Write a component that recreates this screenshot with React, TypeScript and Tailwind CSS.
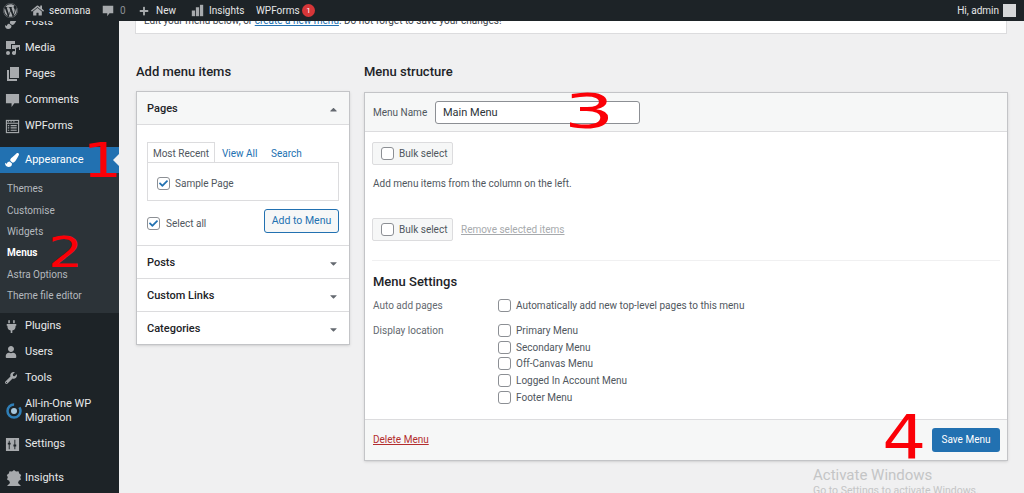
import type { ReactNode } from 'react';
import { FaWordpress, FaHome, FaPlus, FaPaintBrush, FaPlug, FaUser, FaWrench, FaCheck, FaCaretUp, FaCaretDown } from 'react-icons/fa';

const font = "font-['Roboto','Noto_Sans',sans-serif]";
const digit = "absolute text-[#fb0007] font-['DejaVu_Sans',sans-serif]";

function BarsIcon({ className }: { className?: string }) {
  return (
    <svg viewBox="0 0 16 16" className={className} fill="currentColor">
      <rect x="1" y="8" width="4" height="7" />
      <rect x="6" y="4" width="4" height="11" />
      <rect x="11" y="1" width="4" height="14" />
    </svg>
  );
}

function BubbleIcon({ className }: { className?: string }) {
  return (
    <svg viewBox="0 0 16 16" className={className} fill="currentColor">
      <path d="M1 1h14v10h-5l-3 4v-4H1z" />
    </svg>
  );
}

function MediaIcon() {
  return (
    <svg viewBox="0 0 16 16" className="w-4 h-4" fill="currentColor">
      <path d="M1 1h9v3H6v5H1z" />
      <path d="M7 5h8v5h-1V7l-3 1v5a2 2 0 1 1-1-1.7V9H7z" />
      <circle cx="3" cy="13" r="2" />
    </svg>
  );
}

function PagesIcon() {
  return (
    <svg viewBox="0 0 16 16" className="w-4 h-4" fill="currentColor">
      <path d="M5 1h9v11H5z" />
      <path d="M2 4h2v9h8v2H2z" />
    </svg>
  );
}

function FormsIcon() {
  return (
    <svg viewBox="0 0 16 16" className="w-[15px] h-[15px]" fill="none" stroke="currentColor" strokeWidth="1.2">
      <rect x="1.5" y="1.5" width="13" height="13" />
      <path d="M1.500 4.500h13M3 2.800h1M6 2.800h1M9 2.800h1M6 7h6.500M6 9.500h6.500M6 12h6.500M3 7h1.500M3 9.500h1.500M3 12h1.500" />
    </svg>
  );
}

function SettingsIcon() {
  return (
    <svg viewBox="0 0 16 16" className="w-[15px] h-[15px]" fill="currentColor">
      <path fillRule="evenodd" d="M1 1h14v14H1zM4 4v2H3v2h1v5h1V8h1V6H5V4zM10 3v5H9v2h1v3h1v-3h1V8h-1V3z" />
    </svg>
  );
}

function MigrationIcon() {
  return (
    <svg viewBox="0 0 18 18" className="w-[18px] h-[18px]" fill="none">
      <circle cx="9" cy="9" r="6.500" stroke="#2f7fb8" strokeWidth="2.500" strokeDasharray="30 6" />
      <circle cx="9" cy="9" r="3" fill="#a7c6dc" />
    </svg>
  );
}

function InsightsIcon() {
  return (
    <svg viewBox="0 0 18 18" className="w-[18px] h-[18px]" fill="currentColor">
      <path d="M9 1l2 1.500 2.500-.3.7 2.300 2 1.400-1 2.300.8 2.300-2.200 1.200L13 14H5l-.8-2.300L2 10.500l.8-2.300-1-2.300 2-1.400.7-2.300 2.500.3z" />
      <path d="M2 17l3-3h8l3 3z" />
    </svg>
  );
}

function MenuRow({ icon, label, h = 'h-[26px]' }: { icon: ReactNode; label: ReactNode; h?: string }) {
  return (
    <div className={`${h} flex items-center text-[11px] leading-[14px] text-[#e8e9ea]`}>
      <span className="w-[25px] pl-[5px] flex justify-start text-[#a7aaad]">{icon}</span>
      <span>{label}</span>
    </div>
  );
}

function SubItem({ children, bold }: { children: ReactNode; bold?: boolean }) {
  return (
    <div className={`h-[21.4px] flex items-center pl-[7px] text-[10px] ${bold ? 'font-bold text-white' : 'text-[#b4b9be]'}`}>
      {children}
    </div>
  );
}

function Checkbox({ checked }: { checked?: boolean }) {
  return (
    <span className="w-[13px] h-[13px] shrink-0 rounded-[3px] border border-[#8c8f94] bg-white flex items-center justify-center">
      {checked && <FaCheck className="w-[9px] h-[9px] text-[#2271b1]" />}
    </span>
  );
}

function AccordionRow({ label }: { label: string }) {
  return (
    <div className="h-[33px] pt-[2px] flex items-center justify-between pl-[10px] pr-[10px] border-t border-[#dcdcde] text-[11px] font-medium text-[#1d2327]">
      <span>{label}</span>
      <FaCaretDown className="w-[11px] h-[11px] text-[#646970]" />
    </div>
  );
}

function BulkSelect() {
  return (
    <div className="w-[81px] h-[23px] shrink-0 flex items-center gap-[5px] pl-2 rounded-[2px] border border-[#dcdcde] bg-[#f6f7f7] text-[10px] text-[#50575e]">
      <Checkbox />
      <span>Bulk select</span>
    </div>
  );
}

function LocationRow({ label }: { label: string }) {
  return (
    <div className="h-[16.800px] flex items-center gap-[5px] text-[10px] text-[#50575e]">
      <Checkbox />
      <span>{label}</span>
    </div>
  );
}

export default function App() {
  return (
    <div className={`relative w-[1024px] h-[493px] overflow-hidden bg-[#f0f0f1] ${font}`}>
      {/* admin bar */}
      <div className="relative z-10 h-[21px] bg-[#1d2327] flex items-center justify-between text-[10px] text-[#e6e7e8]">
        <div className="flex items-center">
          <FaWordpress className="ml-[3px] w-[15px] h-[15px] text-[#a7aaad]" />
          <FaHome className="ml-[13px] w-[13px] h-[13px] text-[#a7aaad]" />
          <span className="ml-[5px] w-[42px]">seomana</span>
          <BubbleIcon className="ml-[11px] w-[12px] h-[12px] text-[#a7aaad]" />
          <span className="ml-[6px] w-[9px] text-[#8c8f94]">0</span>
          <FaPlus className="ml-[10px] w-[10px] h-[10px] text-[#a7aaad]" />
          <span className="ml-[7px] w-[24px]">New</span>
          <BarsIcon className="ml-[11px] w-[13px] h-[13px] text-[#a7aaad]" />
          <span className="ml-[5px] w-[38px]">Insights</span>
          <span className="ml-[9px] w-[44px]">WPForms</span>
          <span className="ml-[2px] w-[13px] h-[13px] rounded-full bg-[#d63638] text-white text-[8px] flex items-center justify-center">1</span>
        </div>
        <div className="flex items-center gap-[4px] pr-[8px]">
          <span>Hi, admin</span>
          <span className="w-[13px] h-[13px] bg-[#d5d7d9]" />
        </div>
      </div>

      <div className="flex h-[472px]">
        {/* sidebar */}
        <aside className="relative w-[119px] shrink-0 overflow-hidden bg-[#1d2327]">
          <div className="mt-[-12px]">
            <MenuRow icon={<FaPaintBrush className="w-[13px] h-[13px]" />} label="Posts" />
            <MenuRow icon={<MediaIcon />} label="Media" />
            <MenuRow icon={<PagesIcon />} label="Pages" />
            <MenuRow icon={<BubbleIcon className="w-[15px] h-[15px]" />} label="Comments" />
            <MenuRow icon={<FormsIcon />} label="WPForms" />
            <div className="h-[8px]" />
            <div className="relative h-[26px] bg-[#2271b1] flex items-center text-[11px] text-white">
              <span className="w-[25px] pl-[5px]"><FaPaintBrush className="w-[14px] h-[14px]" /></span>
              <span>Appearance</span>
              <span className="absolute right-0 top-[7px] border-y-[6px] border-r-[6px] border-y-transparent border-r-[#f0f0f1]" />
            </div>
            <div className="bg-[#2c3338] pt-[5px] pb-[7px]">
              <SubItem>Themes</SubItem>
              <SubItem>Customise</SubItem>
              <SubItem>Widgets</SubItem>
              <SubItem bold>Menus</SubItem>
              <SubItem>Astra Options</SubItem>
              <SubItem>Theme file editor</SubItem>
            </div>
            <MenuRow icon={<FaPlug className="w-[13px] h-[13px]" />} label="Plugins" />
            <MenuRow icon={<FaUser className="w-[12px] h-[12px]" />} label="Users" />
            <MenuRow icon={<FaWrench className="w-[12px] h-[12px]" />} label="Tools" />
            <MenuRow icon={<MigrationIcon />} label={<>All-in-One WP<br />Migration</>} h="h-[40px]" />
            <MenuRow icon={<SettingsIcon />} label="Settings" />
            <div className="h-[8px]" />
            <MenuRow icon={<InsightsIcon />} label="Insights" />
          </div>
        </aside>

        {/* main */}
        <main className="flex-1 min-w-0 pl-[17px]">
          <div className="mt-[-21px] h-[34px] w-[872px] -ml-px bg-white border border-[#dcdcde] pl-[8px] pt-[12px] text-[10px] text-[#3c434a]">
            Edit your menu below, or <span className="text-[#2271b1] underline">create a new menu</span>. Do not forget to save your changes!
          </div>

          <div className="flex gap-[14px] mt-[28px]">
            {/* left column */}
            <div className="w-[214px] shrink-0">
              <h2 className="h-[20px] flex items-center text-[13px] font-medium text-[#1d2327]">Add menu items</h2>
              <div className="mt-[9px] bg-white border border-[#c3c4c7] shadow-sm">
                <div className="h-[33px] pt-[2px] flex items-center justify-between pl-[10px] pr-[10px] bg-[#f6f7f7] border-b border-[#dcdcde] text-[11px] font-medium text-[#1d2327]">
                  <span>Pages</span>
                  <FaCaretUp className="w-[11px] h-[11px] text-[#646970]" />
                </div>
                <div className="px-[10px] pt-[17px] h-[120px]">
                  <div className="flex text-[10px]">
                    <span className="w-[68px] h-[21px] pt-px flex items-center justify-center border border-b-0 border-[#dcdcde] text-[#50575e]">Most Recent</span>
                    <span className="ml-[7px] w-[49px] pt-px flex items-center text-[#2271b1]">View All</span>
                    <span className="pt-px flex items-center text-[#2271b1]">Search</span>
                  </div>
                  <div className="-mt-px h-[39px] border border-[#dcdcde] flex items-center gap-[5px] pl-[9px] pt-[3px] text-[10px] text-[#50575e]">
                    <Checkbox checked />
                    <span>Sample Page</span>
                  </div>
                  <div className="mt-[8px] flex items-center justify-between">
                    <span className="flex items-center gap-[6px] pt-[4px] text-[10px] text-[#50575e]">
                      <Checkbox checked />
                      Select all
                    </span>
                    <span className="w-[75px] h-[24px] flex items-center justify-center rounded-[3px] border border-[#2271b1] bg-[#f6f7f7] text-[10.5px] text-[#2271b1]">Add to Menu</span>
                  </div>
                </div>
                <AccordionRow label="Posts" />
                <AccordionRow label="Custom Links" />
                <AccordionRow label="Categories" />
              </div>
            </div>

            {/* right column */}
            <div className="w-[644px] shrink-0">
              <h2 className="h-[20px] flex items-center text-[13px] font-medium text-[#1d2327]">Menu structure</h2>
              <div className="mt-[10px] bg-white border border-[#c3c4c7] shadow-sm">
                <div className="h-[39px] flex items-center pl-[8px] bg-[#f6f7f7] border-b border-[#dcdcde] text-[10px] text-[#50575e]">
                  <span className="w-[62px]">Menu Name</span>
                  <span className="w-[205px] h-[23px] pt-[2px] flex items-center px-[7px] rounded-[3px] border border-[#8c8f94] bg-white text-[11px] text-[#2c3338]">Main Menu</span>
                </div>
                <div className="px-[7px] pt-[10px]">
                  <BulkSelect />
                  <p className="mt-[11px] pl-px h-[14px] flex items-center text-[10px] text-[#50575e]">Add menu items from the column on the left.</p>
                  <div className="mt-[28px] flex items-center gap-[8px]">
                    <BulkSelect />
                    <span className="text-[10px] text-[#a7aaad] underline">Remove selected items</span>
                  </div>
                  <div className="mt-[19px] border-t border-[#f0f0f1]" />
                  <h3 className="mt-[12px] pl-px h-[17px] flex items-center text-[13px] font-medium text-[#1d2327]">Menu Settings</h3>
                  <div className="mt-[7px] pl-px flex text-[10px] text-[#646970]">
                    <span className="w-[125px] h-[16px] flex items-center">Auto add pages</span>
                    <div className="flex items-center gap-[5px] h-[16px] text-[#50575e]">
                      <Checkbox />
                      <span>Automatically add new top-level pages to this menu</span>
                    </div>
                  </div>
                  <div className="mt-[9px] pl-px flex text-[10px] text-[#646970]">
                    <span className="w-[125px] h-[16px] flex items-center">Display location</span>
                    <div>
                      <LocationRow label="Primary Menu" />
                      <LocationRow label="Secondary Menu" />
                      <LocationRow label="Off-Canvas Menu" />
                      <LocationRow label="Logged In Account Menu" />
                      <LocationRow label="Footer Menu" />
                    </div>
                  </div>
                </div>
                <div className="mt-[13px] h-[41px] flex items-center justify-between pl-[8px] pr-[7px] bg-[#f6f7f7] border-t border-[#dcdcde]">
                  <span className="text-[10px] text-[#b32d2e] underline">Delete Menu</span>
                  <span className="w-[68px] h-[24px] flex items-center justify-center rounded-[3px] bg-[#2271b1] text-[10px] text-white">Save Menu</span>
                </div>
              </div>
            </div>
          </div>
        </main>
      </div>

      {/* annotations drawn over the screenshot */}
      <span className={`${digit} left-[87px] top-[140px] text-[48px] leading-[40px] scale-x-[1.3]`}>1</span>
      <span className={`${digit} left-[52px] top-[235px] text-[42px] leading-[36px] scale-x-[1.3]`}>2</span>
      <span className={`${digit} left-[574px] top-[91px] text-[48px] leading-[40px] scale-x-[1.65]`}>3</span>
      <span className={`${digit} left-[885px] top-[412px] text-[60px] leading-[50px] scale-x-[1.15]`}>4</span>

      {/* windows watermark */}
      <div className="absolute left-[813px] top-[466px] text-[#c4c5c6]">
        <div className="text-[15px] leading-[18px]">Activate Windows</div>
        <div className="text-[10.5px] leading-[14px]">Go to Settings to activate Windows.</div>
      </div>
    </div>
  );
}
